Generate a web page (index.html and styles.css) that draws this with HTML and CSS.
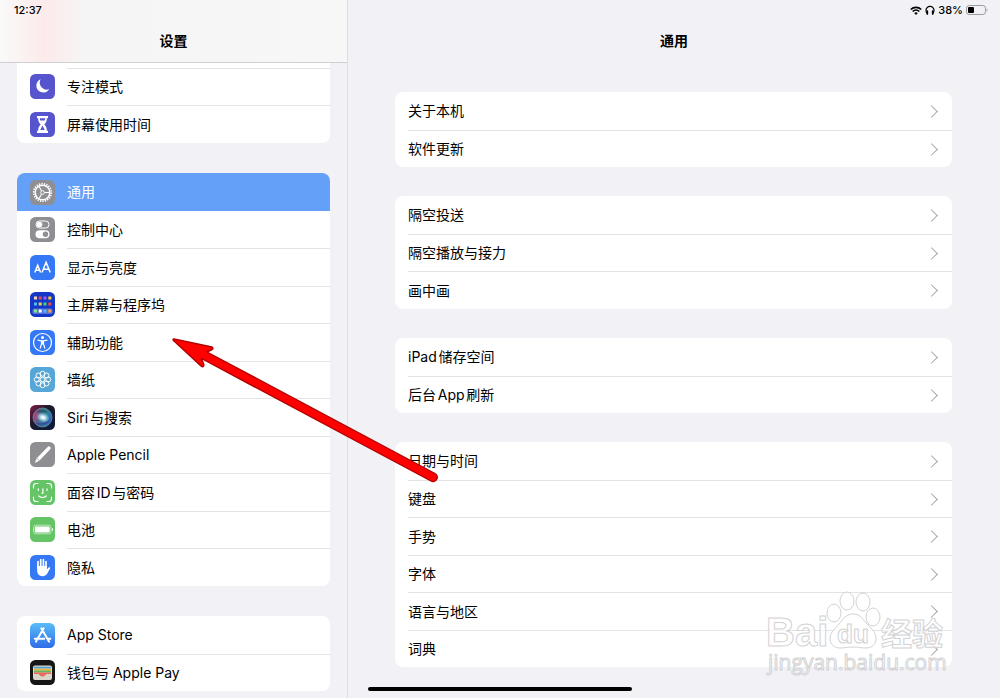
FILE: index.html
```html
<!DOCTYPE html>
<html lang="zh-CN">

<head>
    <meta charset="UTF-8">
    <meta name="viewport" content="width=device-width, initial-scale=1.0">
    <title>设置</title>
    <link rel="stylesheet" href="styles.css">
</head>

<body>
    <div class="screen">

        <aside class="sidebar">
            <header class="bar sidebar-bar">
                <div class="status">12:37</div>
                <h1>设置</h1>
            </header>

            <nav class="groups">
                <ul class="group cut">
                    <li class="peek"></li>
                    <li>
                        <a href="#focus">
                            <svg class="icon" viewBox="0 0 25 25">
                                <rect width="25" height="25" rx="5.5" fill="#5655ce" />
                                <path d="M10.6 5.3A6.9 6.9 0 1 0 19.3 15 6.9 6.9 0 0 1 10.6 5.3z" fill="#fff" />
                            </svg>
                            <span class="label">专注模式</span>
                        </a>
                    </li>
                    <li>
                        <a href="#screentime">
                            <svg class="icon" viewBox="0 0 25 25">
                                <rect width="25" height="25" rx="5.5" fill="#5655ce" />
                                <path d="M7 4h11v2.3h-1.2c0 3.2-.9 4.7-2.5 6.2 1.6 1.5 2.5 3 2.5 6.2H18V21H7v-2.3h1.2c0-3.2.9-4.7 2.5-6.2-1.6-1.5-2.5-3-2.5-6.2H7z" fill="#fff" />
                                <path d="M9.8 6.3h5.4c-.1 1-.2 1.7-.5 2.3h-4.4c-.3-.6-.4-1.3-.5-2.3zM12.5 13.5l2.3 4.5h-4.6z" fill="#5655ce" />
                            </svg>
                            <span class="label">屏幕使用时间</span>
                        </a>
                    </li>
                </ul>

                <ul class="group">
                    <li class="selected">
                        <a href="#general" aria-current="page">
                            <svg class="icon" viewBox="0 0 25 25">
                                <rect width="25" height="25" rx="5.5" fill="#8e8e93" />
                                <circle cx="12.5" cy="12.5" r="8.8" fill="none" stroke="#fff" stroke-width="1.8" stroke-dasharray="1.3 1.204" />
                                <circle cx="12.5" cy="12.5" r="7.3" fill="none" stroke="#fff" stroke-width="1.5" />
                                <circle cx="12.5" cy="12.5" r="1.8" fill="none" stroke="#fff" />
                                <path d="M14.5 12.5h5M11.5 10.7L9 6.5M11.5 14.3L9 18.5" stroke="#fff" stroke-width="1.1" />
                            </svg>
                            <span class="label">通用</span>
                        </a>
                    </li>
                    <li>
                        <a href="#control">
                            <svg class="icon" viewBox="0 0 25 25">
                                <rect width="25" height="25" rx="5.5" fill="#8e8e93" />
                                <rect x="6" y="4" width="13" height="7" rx="3.5" fill="none" stroke="#fff" />
                                <circle cx="9.5" cy="7.5" r="2.8" fill="#fff" />
                                <rect x="5.5" y="13.3" width="14" height="8" rx="4" fill="#fff" />
                                <circle cx="15.5" cy="17.3" r="2.7" fill="#8e8e93" />
                            </svg>
                            <span class="label">控制中心</span>
                        </a>
                    </li>
                    <li>
                        <a href="#display">
                            <svg class="icon" viewBox="0 0 25 25">
                                <rect width="25" height="25" rx="5.5" fill="#3478f6" />
                                <path d="M4.8 17.5l2.9-7.3 2.9 7.3M5.7 15.2h4M12 17.5l4.1-10.3 4.1 10.3M13.3 14.3h5.6" fill="none" stroke="#fff" stroke-width="1.5" />
                            </svg>
                            <span class="label">显示与亮度</span>
                        </a>
                    </li>
                    <li>
                        <a href="#home">
                            <svg class="icon" viewBox="0 0 25 25">
                                <rect width="25" height="25" rx="5.5" fill="#1437c8" />
                                <rect x="2.5" y="16.5" width="20" height="5.5" rx="1.5" fill="#5672d8" />
                                <g stroke-width="3">
                                    <path d="M4 19h3" stroke="#8be58a" />
                                    <path d="M4 6h3" stroke="#f5d6c0" />
                                    <path d="M8.7 6h3M18.3 12h3" stroke="#ef4a4a" />
                                    <path d="M13.5 6h3" stroke="#a05cf0" />
                                    <path d="M18.3 6h3M8.7 12h3" stroke="#f3cf3c" />
                                    <path d="M4 12h3M13.5 19h3" stroke="#55b9f5" />
                                    <path d="M13.5 12h3" stroke="#4fd07a" />
                                    <path d="M8.7 19h3" stroke="#fff" />
                                    <path d="M18.3 19h3" stroke="#f4a04c" />
                                </g>
                            </svg>
                            <span class="label">主屏幕与程序坞</span>
                        </a>
                    </li>
                    <li>
                        <a href="#accessibility">
                            <svg class="icon" viewBox="0 0 25 25">
                                <rect width="25" height="25" rx="5.5" fill="#3478f6" />
                                <circle cx="12.5" cy="12.5" r="9" fill="none" stroke="#fff" stroke-width="1.2" />
                                <circle cx="12.5" cy="7.5" r="1.5" fill="#fff" />
                                <path d="M8 10.2l3.5.7v3L10.2 18.2M17 10.2l-3.5.7v3l1.3 4.3" fill="none" stroke="#fff" stroke-width="1.2" stroke-linecap="round" />
                                <path d="M11 10.3h3v4.2h-3z" fill="#fff" />
                            </svg>
                            <span class="label">辅助功能</span>
                        </a>
                    </li>
                    <li>
                        <a href="#wallpaper">
                            <svg class="icon" viewBox="0 0 25 25">
                                <rect width="25" height="25" rx="5.5" fill="#56a7d8" />
                                <g fill="none" stroke="#fff">
                                    <circle cx="12.5" cy="12.5" r="2.2" />
                                    <circle cx="12.5" cy="6.8" r="2.5" />
                                    <circle cx="16.5" cy="8.5" r="2.5" />
                                    <circle cx="18.2" cy="12.5" r="2.5" />
                                    <circle cx="16.5" cy="16.5" r="2.5" />
                                    <circle cx="12.5" cy="18.2" r="2.5" />
                                    <circle cx="8.5" cy="16.5" r="2.5" />
                                    <circle cx="6.8" cy="12.5" r="2.5" />
                                    <circle cx="8.5" cy="8.5" r="2.5" />
                                </g>
                            </svg>
                            <span class="label">墙纸</span>
                        </a>
                    </li>
                    <li>
                        <a href="#siri">
                            <svg class="icon" viewBox="0 0 25 25">
                                <defs>
                                    <linearGradient id="siri-base" x1="0" y1="0" x2="1" y2="1">
                                        <stop offset="0" stop-color="#8a1c48" />
                                        <stop offset=".4" stop-color="#1d1a2c" />
                                        <stop offset="1" stop-color="#0b1a3c" />
                                    </linearGradient>
                                    <linearGradient id="siri-orb" x1="0" y1=".3" x2="1" y2=".6">
                                        <stop offset="0" stop-color="#c73676" />
                                        <stop offset=".4" stop-color="#47708f" />
                                        <stop offset=".7" stop-color="#2e8a9c" />
                                        <stop offset="1" stop-color="#3157c4" />
                                    </linearGradient>
                                    <radialGradient id="siri-glow">
                                        <stop offset="0" stop-color="#fff" />
                                        <stop offset=".3" stop-color="#e8f6ff" stop-opacity=".9" />
                                        <stop offset="1" stop-color="#9fd8f0" stop-opacity="0" />
                                    </radialGradient>
                                </defs>
                                <rect width="25" height="25" rx="5.5" fill="url(#siri-base)" />
                                <circle cx="12.5" cy="12.5" r="9.5" fill="url(#siri-orb)" stroke="#5d8f9c" stroke-width=".8" />
                                <path d="M6 7c4-4 10-3 13 1-5-2-8 1-13-1z" fill="#16505f" opacity=".6" />
                                <path d="M5 17c5 2 10 1 15-3-2 7-11 9-15 3z" fill="#3b3c9c" opacity=".7" />
                                <ellipse cx="13" cy="12.5" rx="7" ry="5" fill="url(#siri-glow)" transform="rotate(20 13 12.5)" />
                            </svg>
                            <span class="label">Siri与搜索</span>
                        </a>
                    </li>
                    <li>
                        <a href="#pencil">
                            <svg class="icon" viewBox="0 0 25 25">
                                <rect width="25" height="25" rx="5.5" fill="#8e8e93" />
                                <path d="M17.7 5.2a1.5 1.5 0 0 1 2.3 2L9.2 18.4 5.3 20.4l1.6-4z" fill="#fff" stroke="#fff" stroke-width=".6" />
                                <path d="M7 16.3l2.3 2" stroke="#8e8e93" stroke-width=".6" />
                            </svg>
                            <span class="label">Apple Pencil</span>
                        </a>
                    </li>
                    <li>
                        <a href="#faceid">
                            <svg class="icon" viewBox="0 0 25 25">
                                <rect width="25" height="25" rx="5.5" fill="#65c466" />
                                <g fill="none" stroke="#fff" stroke-width="1.2" stroke-linecap="round">
                                    <path d="M3.5 8V6a2.5 2.5 0 0 1 2.5-2.5h2M17 3.5h2A2.5 2.5 0 0 1 21.5 6v2M21.5 17v2a2.5 2.5 0 0 1-2.5 2.5h-2M8 21.5H6A2.5 2.5 0 0 1 3.5 19v-2" />
                                    <path d="M8.3 8.8v1.7M17 8.8v1.7M12.9 8.8v4.4h-1M8.7 16c2 2 5.6 2 7.6 0" />
                                </g>
                            </svg>
                            <span class="label">面容ID与密码</span>
                        </a>
                    </li>
                    <li>
                        <a href="#battery">
                            <svg class="icon" viewBox="0 0 25 25">
                                <rect width="25" height="25" rx="5.5" fill="#65c466" />
                                <rect x="3.5" y="8.2" width="17.5" height="8.6" rx="2.2" fill="none" stroke="#d4f0d4" stroke-width=".8" />
                                <rect x="4.8" y="9.5" width="14.9" height="6" rx="1.2" fill="#fff" />
                                <path d="M22.5 11.3v2.4" stroke="#fff" />
                            </svg>
                            <span class="label">电池</span>
                        </a>
                    </li>
                    <li>
                        <a href="#privacy">
                            <svg class="icon" viewBox="0 0 25 25">
                                <rect width="25" height="25" rx="5.5" fill="#3478f6" />
                                <path d="M8 13V6.5M10.7 12V4.7M13.4 12V4.7M16 13V6.5" stroke="#fff" stroke-width="1.7" stroke-linecap="round" />
                                <path d="M7.15 11h9.7v3.5l1.7-2c.8-.8 2-.2 1.5.9l-2.9 5.4c-1 1.7-2.5 2.4-4.6 2.4-3.5 0-5.4-2.2-5.4-5.9z" fill="#fff" />
                            </svg>
                            <span class="label">隐私</span>
                        </a>
                    </li>
                </ul>

                <ul class="group">
                    <li>
                        <a href="#appstore">
                            <svg class="icon" viewBox="0 0 25 25">
                                <defs>
                                    <linearGradient id="store" x1="0" y1="0" x2="0" y2="1">
                                        <stop offset="0" stop-color="#59bdf8" />
                                        <stop offset="1" stop-color="#2f6ce8" />
                                    </linearGradient>
                                </defs>
                                <rect width="25" height="25" rx="5.5" fill="url(#store)" />
                                <path d="M13.7 5.3L7.9 15.3M11.3 5.3l7.7 13.3M4.8 15.7h9.4M17.3 15.7h3M6.7 17.4l-.7 1.2" stroke="#fff" stroke-width="2" stroke-linecap="round" />
                            </svg>
                            <span class="label">App Store</span>
                        </a>
                    </li>
                    <li>
                        <a href="#wallet">
                            <svg class="icon" viewBox="0 0 25 25">
                                <rect width="25" height="25" rx="5.5" fill="#161616" />
                                <rect x="3" y="5.5" width="19" height="14.5" rx="2" fill="#d9d7cb" />
                                <path d="M4 7.7h17" stroke="#4a9fd4" stroke-width="1.8" />
                                <path d="M4 9.7h17" stroke="#f2b437" stroke-width="1.8" />
                                <path d="M4 11.6h17" stroke="#69b45a" stroke-width="2" />
                                <path d="M4 12.6h17v1.4h-4c-1.5 0-2 2.6-4.5 2.6S9.5 14 8 14H4z" fill="#ec6a5b" />
                            </svg>
                            <span class="label">钱包与 Apple Pay</span>
                        </a>
                    </li>
                </ul>
            </nav>
        </aside>

        <main class="detail">
            <header class="bar">
                <div class="status">
                    <svg class="wifi" viewBox="0 0 12 9">
                        <path d="M.8 3.5a7.4 7.4 0 0 1 10.4 0M2.7 5.5a4.7 4.7 0 0 1 6.6 0" fill="none" stroke="#000" stroke-width="1.7" />
                        <path d="M6 9L4.2 7.1a2.6 2.6 0 0 1 3.6 0z" />
                    </svg>
                    <svg class="headphones" viewBox="0 0 10 10">
                        <path d="M2.4 8.5A4 4 0 1 1 7.6 8.5" fill="none" stroke="#000" stroke-width="1.2" />
                        <path d="M2.3 6v3M7.7 6v3" stroke="#000" stroke-width="1.7" stroke-linecap="round" />
                    </svg>
                    <span>38%</span>
                    <svg class="battery" viewBox="0 0 22 10">
                        <rect x=".5" y=".5" width="19" height="9" rx="2.7" fill="none" stroke="#9b9b9f" />
                        <rect x="2" y="2" width="6" height="6" rx="1" />
                        <path d="M20.7 3.5c1 .4 1 2.6 0 3z" fill="#8b8b8f" />
                    </svg>
                </div>
                <h2>通用</h2>
            </header>

            <div class="groups">
                <ul class="group">
                    <li><a href="#about"><span class="label">关于本机</span></a></li>
                    <li><a href="#update"><span class="label">软件更新</span></a></li>
                </ul>
                <ul class="group">
                    <li><a href="#airdrop"><span class="label">隔空投送</span></a></li>
                    <li><a href="#airplay"><span class="label">隔空播放与接力</span></a></li>
                    <li><a href="#pip"><span class="label">画中画</span></a></li>
                </ul>
                <ul class="group">
                    <li><a href="#storage"><span class="label">iPad储存空间</span></a></li>
                    <li><a href="#refresh"><span class="label">后台App刷新</span></a></li>
                </ul>
                <ul class="group">
                    <li><a href="#date"><span class="label">日期与时间</span></a></li>
                    <li><a href="#keyboard"><span class="label">键盘</span></a></li>
                    <li><a href="#gestures"><span class="label">手势</span></a></li>
                    <li><a href="#fonts"><span class="label">字体</span></a></li>
                    <li><a href="#language"><span class="label">语言与地区</span></a></li>
                    <li><a href="#dictionary"><span class="label">词典</span></a></li>
                </ul>
            </div>
        </main>

        <!-- red pointer -->
        <svg class="arrow" viewBox="0 0 270 150">
            <path d="M4 4L42 12Q44 13.5 42 14.5L37 17 265 138.500A4 4 0 0 1 261 146L31.500 23.500 34 30Q33.500 33 31 31L4 6Q2 4 4 4z" fill="#fe0000" stroke="#b30000" stroke-width="1.4" stroke-linejoin="round" />
        </svg>

        <!-- watermark -->
        <svg class="watermark" viewBox="0 0 184 90">
            <g>
                <ellipse cx="68" cy="23" rx="7" ry="9" />
                <ellipse cx="81" cy="11" rx="7" ry="9" />
                <ellipse cx="97" cy="12" rx="7" ry="9" />
                <ellipse cx="107" cy="27" rx="7" ry="9" />
                <path d="M87 24c8 0 10 6 14 10 5 5 9 8 9 15 0 6-5 9-10 9-5 0-8-1-13-1s-8 1-13 1c-5 0-10-3-10-9 0-7 5-10 9-15 4-4 6-10 14-10z" />
            </g>
            <text class="mark-name" x="0" y="56">Bai</text>
            <text class="mark-du" x="71" y="53">du</text>
            <text class="mark-cjk" x="115" y="55">经验</text>
            <text class="mark-url" x="2" y="80">jingyan.baidu.com</text>
        </svg>

        <div class="home-indicator"></div>
    </div>
</body>

</html>
```
FILE: styles.css
```css
* {
    box-sizing: border-box;
    margin: 0;
    padding: 0;
}

body {
    background-color: #f1f1f6;
    color: #000;
    font-family: Inter, "Noto Sans CJK SC", sans-serif;
    font-size: 14px;
    line-height: 20px;
    text-autospace: normal;
}

.screen {
    position: relative;
    display: flex;
    min-height: 100vh;
    overflow: hidden;
}

.sidebar {
    flex: 0 0 348px;
    border-right: 1px solid #dedee2;
}

.detail {
    flex: 1;
}

/* top bars */
.bar {
    height: 63px;
    text-align: center;
}

.sidebar-bar {
    background: linear-gradient(to right, #faf9f9 0, #fbf3f3 20px, #fceaea 45px, #f6f5f5 85px, #f7f7f7 100%);
    border-bottom: 1px solid #cfcfd2;
}

.status {
    display: flex;
    align-items: center;
    height: 20px;
    padding: 0 14px;
    font-size: 11px;
    font-weight: 500;
}

.detail .status {
    justify-content: flex-end;
    gap: 3px;
    padding-right: 12px;
}

.wifi {
    width: 12px;
    height: 9px;
}

.headphones {
    width: 10px;
    height: 10px;
}

.battery {
    width: 22px;
    height: 10px;
}

h1,
h2 {
    margin-top: 11px;
    font-size: 14px;
    font-weight: 700;
}

/* grouped lists */
.groups {
    display: flex;
    flex-direction: column;
    gap: 30px;
    padding: 0 17px;
}

.detail .groups {
    gap: 29px;
    padding: 29px 48px 0 47px;
}

.group {
    list-style: none;
    overflow: hidden;
    background-color: #fff;
    border-radius: 8px;
}

.group.cut {
    border-top-left-radius: 0;
    border-top-right-radius: 0;
}

.group li {
    height: 37px;
}

.group li:nth-child(odd) {
    height: 38px;
}

.group li.peek {
    height: 5px;
}

.group a {
    display: flex;
    align-items: center;
    gap: 12px;
    height: 100%;
    padding-left: 13px;
    color: inherit;
    text-decoration: none;
}

.icon {
    flex: none;
    width: 25px;
    height: 25px;
}

.label {
    display: flex;
    flex: 1;
    align-items: center;
    height: 100%;
}

li + li .label {
    border-top: 1px solid #e3e3e5;
}

.selected {
    background-color: #649ff8;
    color: #fff;
}

.selected + li .label {
    border-top-color: transparent;
}

/* chevron */
.detail .label::after {
    content: "";
    width: 8px;
    height: 8px;
    margin-left: auto;
    margin-right: 16px;
    border-top: 1px solid #a6a6aa;
    border-right: 1px solid #a6a6aa;
    transform: rotate(45deg);
}

/* things lying over the screen */
.arrow {
    position: absolute;
    top: 335px;
    left: 170px;
    width: 270px;
    height: 150px;
}

.watermark {
    position: absolute;
    right: 50px;
    bottom: 18px;
    width: 184px;
    height: 90px;
    fill: rgba(255, 255, 255, .7);
    stroke: #d2d2d4;
    stroke-width: 1px;
}

.mark-name {
    font: bold 40px "Liberation Sans", sans-serif;
}

.mark-du {
    font: bold 26px "Liberation Sans", sans-serif;
}

.mark-cjk {
    font: bold 31px "Noto Sans CJK SC", sans-serif;
}

.mark-url {
    font: 21px "Open Sans", sans-serif;
}

.home-indicator {
    position: absolute;
    bottom: 7px;
    left: 50%;
    width: 264px;
    height: 4px;
    border-radius: 2px;
    background-color: #000;
    transform: translateX(-50%);
}
```
